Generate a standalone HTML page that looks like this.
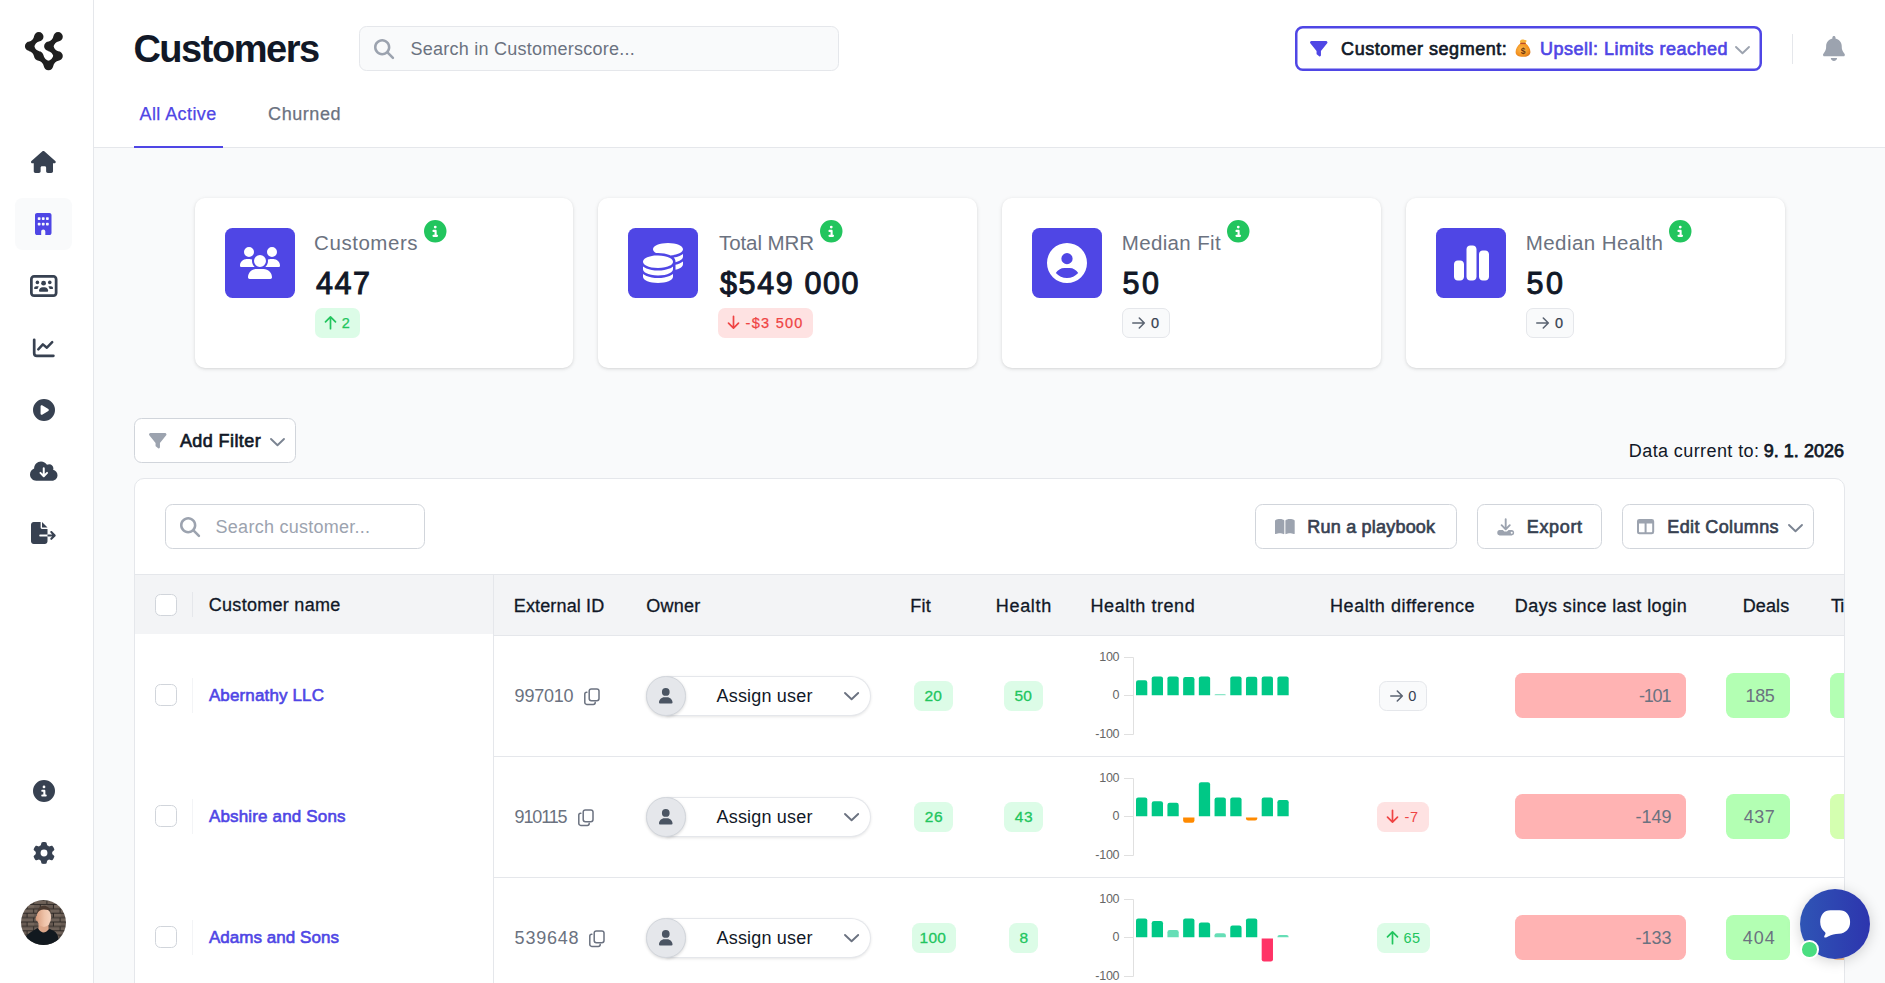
<!DOCTYPE html>
<html lang="en"><head><meta charset="utf-8"><title>Customers</title>
<style>
html,body{margin:0;padding:0}
body{width:1885px;height:983px;overflow:hidden;position:relative;background:#f9fafb;font-family:"Liberation Sans", sans-serif;-webkit-font-smoothing:antialiased}
svg{display:block;overflow:visible}
</style></head><body>
<aside>
<div style="position:absolute;box-sizing:border-box;left:0px;top:0px;width:94px;height:983px;background:#fff;border-right:1px solid #e5e7eb"></div>
<svg style="position:absolute;left:0px;top:0px;" width="93" height="93" viewBox="0 0 93 93"><path d="M34.10 36.70a4.7 4.7 0 1 0 9.4 0a4.7 4.7 0 1 0 -9.4 0zM24.90 46.30a4.7 4.7 0 1 0 9.4 0a4.7 4.7 0 1 0 -9.4 0zM34.10 56.00a4.7 4.7 0 1 0 9.4 0a4.7 4.7 0 1 0 -9.4 0zM43.80 65.60a4.7 4.7 0 1 0 9.4 0a4.7 4.7 0 1 0 -9.4 0zM53.40 56.00a4.7 4.7 0 1 0 9.4 0a4.7 4.7 0 1 0 -9.4 0zM44.10 46.30a4.7 4.7 0 1 0 9.4 0a4.7 4.7 0 1 0 -9.4 0zM53.40 36.70a4.7 4.7 0 1 0 9.4 0a4.7 4.7 0 1 0 -9.4 0zM34.16 35.92A7.11 7.11 0 0 1 28.63 41.70L34.24 47.08A7.11 7.11 0 0 1 39.77 41.30zM28.59 50.89A7.22 7.22 0 0 1 34.16 56.77L39.81 51.41A7.22 7.22 0 0 1 34.24 45.53zM37.88 60.61A7.68 7.68 0 0 1 43.90 66.57L49.42 60.99A7.68 7.68 0 0 1 43.40 55.03zM53.11 66.53A7.56 7.56 0 0 1 59.03 60.61L53.49 55.07A7.56 7.56 0 0 1 47.57 60.99zM59.10 51.41A7.34 7.34 0 0 1 53.43 45.50L47.80 50.89A7.34 7.34 0 0 1 53.47 56.80zM53.43 47.11A7.22 7.22 0 0 1 59.06 41.30L53.47 35.89A7.22 7.22 0 0 1 47.84 41.70z" fill="#1f1f1f"/></svg>
<svg style="position:absolute;left:31.1px;top:150.9px" width="24.75" height="22.00" viewBox="0 0 576 512"><path fill="#374151" d="M575.8 255.500c0 18-15 32.100-32 32.100h-32l.7 160.200c0 2.700-.2 5.400-.5 8.100V472c0 22.100-17.900 40-40 40H456c-1.100 0-2.200 0-3.300-.1c-1.400 .1-2.800 .1-4.200 .1H416 392c-22.100 0-40-17.900-40-40V448 384c0-17.700-14.300-32-32-32H256c-17.700 0-32 14.300-32 32v64 24c0 22.100-17.900 40-40 40H160 128.100c-1.500 0-3-.1-4.500-.2c-1.200 .1-2.400 .2-3.600 .2H104c-22.100 0-40-17.900-40-40V360c0-.9 0-1.900 .1-2.800V287.600H32c-18 0-32-14-32-32.100c0-9 3-17 10-24L266.400 8c7-7 15-8 22-8s15 2 21 7L564.800 231.500c8 7 12 15 11 24z"/></svg>
<div style="position:absolute;box-sizing:border-box;left:15px;top:198px;width:57px;height:52px;background:#f9fafb;border-radius:7.5px"></div>
<svg style="position:absolute;left:35.4px;top:213px;" width="16.5" height="22" viewBox="0 0 384 512"><path fill="#4f46e5" d="M48 0C21.500 0 0 21.500 0 48V464c0 26.500 21.500 48 48 48h96V432c0-26.500 21.500-48 48-48s48 21.500 48 48v80h96c26.500 0 48-21.500 48-48V48c0-26.500-21.500-48-48-48H48zM64 240c0-8.800 7.200-16 16-16h32c8.800 0 16 7.200 16 16v32c0 8.800-7.200 16-16 16H80c-8.800 0-16-7.200-16-16V240zm112-16h32c8.800 0 16 7.200 16 16v32c0 8.800-7.200 16-16 16H176c-8.800 0-16-7.200-16-16V240c0-8.800 7.200-16 16-16zm80 16c0-8.800 7.200-16 16-16h32c8.800 0 16 7.200 16 16v32c0 8.800-7.200 16-16 16H272c-8.800 0-16-7.200-16-16V240zM80 96h32c8.800 0 16 7.200 16 16v32c0 8.800-7.200 16-16 16H80c-8.800 0-16-7.200-16-16V112c0-8.800 7.200-16 16-16zm80 16c0-8.800 7.200-16 16-16h32c8.800 0 16 7.200 16 16v32c0 8.800-7.200 16-16 16H176c-8.800 0-16-7.200-16-16V112zM272 96h32c8.800 0 16 7.200 16 16v32c0 8.800-7.200 16-16 16H272c-8.800 0-16-7.200-16-16V112c0-8.800 7.200-16 16-16z"/></svg>
<svg style="position:absolute;left:30px;top:275px;" width="27.5" height="22" viewBox="0 0 640 512"><path fill="#374151" fill-rule="evenodd" d="M96 0C43 0 0 43 0 96V416c0 53 43 96 96 96H544c53 0 96-43 96-96V96c0-53-43-96-96-96H96zM64 96c0-17.700 14.300-32 32-32H544c17.700 0 32 14.300 32 32V416c0 17.700-14.300 32-32 32H96c-17.700 0-32-14.300-32-32V96z"/><g fill="#374151"><circle cx="316" cy="190" r="56"/><circle cx="172" cy="172" r="42"/><circle cx="460" cy="172" r="42"/><path d="M230 388c-12 0-21-9-21-21c0-46 38-84 84-84h46c46 0 84 38 84 84c0 12-9 21-21 21z"/><path d="M110 326c-8 0-15-7-15-15c0-27 21-48 48-48h30c12 0 23 4 32 11c-16 12-27 31-30 52z"/><path d="M522 326c8 0 15-7 15-15c0-27-21-48-48-48h-30c-12 0-23 4-32 11c16 12 27 31 30 52z"/></g></svg>
<svg style="position:absolute;left:30px;top:335px;" width="28" height="25" viewBox="30 335 28 25"><path d="M34.2 339.8V353.2a2.600 2.600 0 0 0 2.600 2.600H53.400" fill="none" stroke="#374151" stroke-width="2.700" stroke-linecap="round"/><polyline points="38.300,349.300 42.900,344.400 46.900,347.700 52.200,342.200" fill="none" stroke="#374151" stroke-width="2.500" stroke-linecap="round" stroke-linejoin="round"/></svg>
<svg style="position:absolute;left:32.5px;top:399px" width="22.00" height="22.00" viewBox="0 0 512 512"><path fill="#374151" d="M0 256a256 256 0 1 1 512 0A256 256 0 1 1 0 256zM188.300 147.100c-7.600 4.200-12.300 12.300-12.300 20.900V344c0 8.700 4.700 16.700 12.300 20.900s16.800 4.100 24.300-.5l144-88c7.100-4.400 11.500-12.100 11.500-20.500s-4.400-16.100-11.500-20.500l-144-88c-7.400-4.500-16.700-4.700-24.300-.5z"/></svg>
<svg style="position:absolute;left:29.9px;top:460px;" width="27.5" height="22" viewBox="0 0 640 512"><path fill="#374151" d="M144 480C64.500 480 0 415.500 0 336c0-62.800 40.200-116.200 96.200-135.900c-.1-2.700-.2-5.400-.2-8.100c0-88.400 71.600-160 160-160c59.300 0 111 32.200 138.700 80.200C409.900 102 428.300 96 448 96c53 0 96 43 96 96c0 12.200-2.300 23.800-6.400 34.600C596 238.400 640 290.100 640 352c0 70.700-57.300 128-128 128H144z"/><path d="M320 190V372M243 300l77 77 77-77" fill="none" stroke="#fff" stroke-width="46" stroke-linecap="round" stroke-linejoin="round"/></svg>
<svg style="position:absolute;left:31px;top:522px;" width="24.75" height="22" viewBox="0 0 576 512"><path fill="#374151" d="M0 64C0 28.700 28.700 0 64 0H224V128c0 17.700 14.300 32 32 32H384V288H216c-13.300 0-24 10.700-24 24s10.700 24 24 24H384V448c0 35.300-28.700 64-64 64H64c-35.300 0-64-28.700-64-64V64z"/><path fill="#374151" d="M384 128H256V0L384 128z" transform="translate(0,0)"/><path fill="#374151" d="M384 336V288H494.100l-39-39c-9.400-9.400-9.400-24.600 0-33.900s24.600-9.400 33.900 0l80 80c9.400 9.400 9.400 24.600 0 33.900l-80 80c-9.400 9.400-24.600 9.400-33.900 0s-9.400-24.600 0-33.900l39-39H384z"/></svg>
<svg style="position:absolute;left:32.5px;top:780px" width="22.00" height="22.00" viewBox="0 0 512 512"><path fill="#374151" d="M256 512A256 256 0 1 0 256 0a256 256 0 1 0 0 512zM216 336h24V272H216c-13.300 0-24-10.700-24-24s10.700-24 24-24h48c13.300 0 24 10.700 24 24v88h8c13.300 0 24 10.700 24 24s-10.700 24-24 24H216c-13.300 0-24-10.700-24-24s10.700-24 24-24zm40-208a32 32 0 1 1 0 64 32 32 0 1 1 0-64z"/></svg>
<svg style="position:absolute;left:32.5px;top:842px" width="22.00" height="22.00" viewBox="0 0 512 512"><path fill="#374151" d="M495.900 166.600c3.200 8.700 .5 18.400-6.400 24.600l-43.300 39.400c1.100 8.300 1.700 16.800 1.700 25.400s-.6 17.100-1.700 25.400l43.300 39.400c6.900 6.200 9.600 15.900 6.400 24.600c-4.400 11.900-9.700 23.300-15.800 34.300l-4.700 8.100c-6.600 11-14 21.400-22.100 31.200c-5.900 7.200-15.700 9.600-24.500 6.800l-55.700-17.700c-13.400 10.300-28.200 18.900-44 25.400l-12.500 57.100c-2 9.100-9 16.300-18.200 17.800c-13.800 2.300-28 3.500-42.500 3.500s-28.700-1.200-42.500-3.500c-9.200-1.500-16.200-8.700-18.200-17.800l-12.500-57.100c-15.800-6.500-30.600-15.100-44-25.400L83.100 425.900c-8.800 2.800-18.600 .3-24.500-6.800c-8.100-9.800-15.500-20.200-22.100-31.200l-4.700-8.100c-6.100-11-11.400-22.400-15.800-34.300c-3.200-8.700-.5-18.400 6.400-24.600l43.300-39.400C64.600 273.100 64 264.600 64 256s.6-17.100 1.700-25.400L22.400 191.200c-6.900-6.200-9.600-15.900-6.400-24.600c4.400-11.900 9.700-23.300 15.800-34.300l4.700-8.100c6.600-11 14-21.400 22.100-31.200c5.900-7.200 15.700-9.600 24.500-6.800l55.700 17.700c13.400-10.300 28.200-18.900 44-25.400l12.500-57.100c2-9.100 9-16.300 18.200-17.800C227.300 1.200 241.500 0 256 0s28.700 1.200 42.500 3.500c9.200 1.500 16.200 8.700 18.200 17.800l12.500 57.100c15.800 6.500 30.600 15.100 44 25.400l55.700-17.700c8.800-2.800 18.600-.3 24.500 6.800c8.100 9.800 15.500 20.200 22.100 31.200l4.700 8.100c6.100 11 11.400 22.400 15.800 34.300zM256 336a80 80 0 1 0 0-160 80 80 0 1 0 0 160z"/></svg>
<svg style="position:absolute;left:21px;top:899.8px;" width="45" height="45" viewBox="0 0 45 45"><defs><clipPath id="avc"><circle cx="22.500" cy="22.500" r="22.500"/></clipPath><pattern id="brick" width="13.200" height="8.800" patternUnits="userSpaceOnUse"><rect width="13.200" height="8.800" fill="#2f2a27"/><rect x="0" y=".5" width="12.200" height="3.400" fill="#6f6259"/><rect x="-6.600" y="4.900" width="12.200" height="3.400" fill="#675a52"/><rect x="6.600" y="4.900" width="12.200" height="3.400" fill="#74665c"/></pattern><linearGradient id="skin" x1="0" x2="1"><stop offset="0" stop-color="#d99f80"/><stop offset=".55" stop-color="#efc4aa"/><stop offset="1" stop-color="#f4d3bf"/></linearGradient></defs><g clip-path="url(#avc)"><rect width="45" height="45" fill="url(#brick)"/><path d="M3.500 45c0-5 .8-8.500 3.300-10.800 2.500-2.400 6-3.800 9.600-6.300l6.100 4 6.100-3.100c3 1.600 6.300 2.800 7.600 5.600 1.300 2.800 1.700 6.300 1.700 10.600z" fill="#12191f"/><path d="M17.500 24h10v5.500c-1.500 2-3.200 2.900-5 2.900s-3.500-1.200-5-3.400z" fill="#dba689"/><ellipse cx="15.900" cy="18.500" rx="1.300" ry="2.400" fill="#d39a7c"/><ellipse cx="22.900" cy="17.300" rx="7.200" ry="9.700" fill="url(#skin)"/><path d="M16 13.500c.3-5 3-7.800 6.900-7.800 3.600 0 6.300 2.300 6.900 6.500-1.600-2-3.800-2.700-6.900-2.700-3 0-5.300 1.300-6.900 4z" fill="#4b3a30"/></g></svg>
</aside>
<header>
<div style="position:absolute;box-sizing:border-box;left:94px;top:0px;width:1791px;height:148px;background:#fff;border-bottom:1px solid #e5e7eb"></div>
<span style="position:absolute;left:133.40px;top:30px;font-size:38px;line-height:38px;font-weight:700;color:#111827;letter-spacing:-1.471px;white-space:pre">Customers</span>
<div style="position:absolute;box-sizing:border-box;left:359px;top:26px;width:480px;height:45px;background:#f9fafb;border:1px solid #e5e7eb;border-radius:7.5px"></div>
<svg style="position:absolute;left:374px;top:39px" width="20.20" height="20.20" viewBox="0 0 512 512"><path fill="#9ca3af" d="M416 208c0 45.900-14.900 88.300-40 122.700L502.600 457.400c12.500 12.500 12.500 32.800 0 45.300s-32.800 12.500-45.300 0L330.700 376c-34.400 25.200-76.800 40-122.700 40C93.100 416 0 322.900 0 208S93.100 0 208 0S416 93.100 416 208zM208 352a144 144 0 1 0 0-288 144 144 0 1 0 0 288z"/></svg>
<span style="position:absolute;left:410.50px;top:40px;font-size:18px;line-height:18px;font-weight:400;color:#6b7280;letter-spacing:0.249px;white-space:pre">Search in Customerscore...</span>
<svg style="position:absolute;left:1295px;top:26px;" width="467" height="45" viewBox="0 0 467 45"><rect x="1.250" y="1.250" width="464.500" height="42.500" rx="6.500" fill="#fff" stroke="#4f46e5" stroke-width="2.500"/></svg>
<svg style="position:absolute;left:1310px;top:39.75px" width="17.50" height="17.50" viewBox="0 0 512 512"><path fill="#4f46e5" d="M3.900 54.900C10.500 40.900 24.500 32 40 32H472c15.500 0 29.500 8.900 36.100 22.900s4.600 30.500-5.200 42.500L320 320.900V448c0 12.100-6.800 23.200-17.700 28.600s-23.800 4.300-33.500-3l-64-48c-8.100-6-12.800-15.500-12.800-25.600V320.900L9 97.300C-.7 85.400-2.800 68.800 3.900 54.900z"/></svg>
<span style="position:absolute;left:1341.12px;top:40px;font-size:18px;line-height:18px;font-weight:400;color:#111827;letter-spacing:0.543px;white-space:pre;-webkit-text-stroke:0.65px #111827">Customer segment:</span>
<svg style="position:absolute;left:1515.3px;top:39.2px;" width="16" height="18.3" viewBox="0 0 16 18.300"><defs><radialGradient id="mbg" cx=".42" cy=".45" r=".72"><stop offset="0" stop-color="#fdbb4e"/><stop offset=".65" stop-color="#f2901f"/><stop offset="1" stop-color="#c8661b"/></radialGradient></defs><path d="M5 3.300C4.600 1.900 5.600 .7 7.300 .5 8.700 .3 9.700 1.300 10.700 1.100c.8-.1 1.100.9.500 1.700L10.200 4.400H5.800z" fill="#f7b43e"/><path d="M5.600 4.300h4.800c3 2.300 5 5.400 5 8.600 0 3.300-3.100 4.900-7.400 4.900S.6 16.200.6 12.900c0-3.200 2-6.300 5-8.600z" fill="url(#mbg)"/><rect x="5.200" y="3.800" width="5.600" height="1.300" rx=".65" fill="#b94a2a"/><text x="8" y="15" font-size="8.500" font-weight="700" text-anchor="middle" fill="#6b3410" font-family="Liberation Sans, sans-serif">$</text></svg>
<span style="position:absolute;left:1540.12px;top:40px;font-size:18px;line-height:18px;font-weight:400;color:#4f46e5;letter-spacing:0.490px;white-space:pre;-webkit-text-stroke:0.65px #4f46e5">Upsell: Limits reached</span>
<svg style="position:absolute;left:1735.3px;top:45.5px;" width="15" height="8.2" viewBox="0 0 15 8.2"><polyline points="1,1 7.5,7.199999999999999 14,1" fill="none" stroke="#9ca3af" stroke-width="1.9" stroke-linecap="round" stroke-linejoin="round"/></svg>
<div style="position:absolute;box-sizing:border-box;left:1792px;top:34px;width:1px;height:30px;background:#e5e7eb"></div>
<svg style="position:absolute;left:1822.9px;top:35.9px" width="21.88" height="25.00" viewBox="0 0 448 512"><path fill="#9ca3af" d="M224 0c-17.700 0-32 14.300-32 32V51.200C119 66 64 130.600 64 208v18.800c0 47-17.300 92.400-48.500 127.600l-7.400 8.300c-8.400 9.400-10.400 22.900-5.300 34.400S19.400 416 32 416H416c12.600 0 24-7.400 29.200-18.900s3.100-25-5.300-34.400l-7.400-8.300C401.300 319.200 384 273.900 384 226.800V208c0-77.400-55-142-128-156.800V32c0-17.700-14.300-32-32-32zm45.300 493.300c12-12 18.700-28.300 18.700-45.300H224 160c0 17 6.700 33.300 18.700 45.300s28.300 18.700 45.300 18.700s33.300-6.700 45.300-18.700z"/></svg>
<span style="position:absolute;left:139.53px;top:105px;font-size:18px;line-height:18px;font-weight:400;color:#4f46e5;letter-spacing:0.415px;white-space:pre;-webkit-text-stroke:0.25px #4f46e5">All Active</span>
<span style="position:absolute;left:268.12px;top:105px;font-size:18px;line-height:18px;font-weight:400;color:#6b7280;letter-spacing:0.552px;white-space:pre;-webkit-text-stroke:0.25px #6b7280">Churned</span>
<div style="position:absolute;box-sizing:border-box;left:134px;top:145.5px;width:89px;height:2.5px;background:#4f46e5"></div>
</header>
<main><section>
<div style="position:absolute;box-sizing:border-box;left:195px;top:198px;width:378px;height:170px;background:#fff;border-radius:10px;box-shadow:0 1px 4px rgba(0,0,0,.10),0 1px 2.500px rgba(0,0,0,.06)"></div>
<div style="position:absolute;box-sizing:border-box;left:225px;top:228px;width:70px;height:70px;background:#4f46e5;border-radius:7.5px"></div>
<svg style="position:absolute;left:240.0px;top:247.0px" width="40.00" height="32.00" viewBox="0 0 640 512"><path fill="#fff" d="M144 0a80 80 0 1 1 0 160A80 80 0 1 1 144 0zM512 0a80 80 0 1 1 0 160A80 80 0 1 1 512 0zM0 298.700C0 239.800 47.800 192 106.700 192h42.700c15.900 0 31 3.500 44.600 9.700c-1.300 7.200-1.900 14.700-1.900 22.300c0 38.200 16.800 72.500 43.300 96c-.2 0-.4 0-.7 0H21.300C9.600 320 0 310.400 0 298.700zM405.300 320c-.2 0-.4 0-.7 0c26.600-23.500 43.300-57.800 43.300-96c0-7.600-.7-15-1.900-22.300c13.600-6.300 28.700-9.700 44.600-9.700h42.700C592.200 192 640 239.800 640 298.700c0 11.800-9.600 21.300-21.300 21.300H405.300zM224 224a96 96 0 1 1 192 0 96 96 0 1 1 -192 0zM128 485.300C128 411.700 187.700 352 261.300 352H378.700C452.300 352 512 411.700 512 485.300c0 14.700-11.900 26.700-26.700 26.700H154.700c-14.700 0-26.700-11.900-26.700-26.700z"/></svg>
<span style="position:absolute;left:314.10px;top:233px;font-size:20.5px;line-height:20.5px;font-weight:400;color:#6b7280;letter-spacing:0.543px;white-space:pre">Customers</span>
<svg style="position:absolute;left:424.15px;top:220.05px" width="22.50" height="22.50" viewBox="0 0 512 512"><path fill="#22c55e" d="M256 512A256 256 0 1 0 256 0a256 256 0 1 0 0 512zM216 336h24V272H216c-13.300 0-24-10.700-24-24s10.700-24 24-24h48c13.300 0 24 10.700 24 24v88h8c13.300 0 24 10.700 24 24s-10.700 24-24 24H216c-13.300 0-24-10.700-24-24s10.700-24 24-24zm40-208a32 32 0 1 1 0 64 32 32 0 1 1 0-64z"/></svg>
<span style="position:absolute;left:316.00px;top:268px;font-size:30.5px;line-height:30.5px;font-weight:400;color:#111827;letter-spacing:1.537px;white-space:pre;-webkit-text-stroke:1.0px #111827">447</span>
<div style="position:absolute;box-sizing:border-box;left:315px;top:308px;width:45px;height:30px;background:#dcfce7;border-radius:7px"></div>
<svg style="position:absolute;left:324px;top:315px;" width="14" height="15" viewBox="0 0 14 15"><path d="M6.500 13.700V2M1.500 6.800l5-5 5 5" fill="none" stroke="#22c55e" stroke-width="1.700" stroke-linecap="round" stroke-linejoin="round"/></svg>
<span style="position:absolute;left:341.85px;top:316px;font-size:14.5px;line-height:14.5px;font-weight:400;color:#22c55e;letter-spacing:0.000px;white-space:pre;-webkit-text-stroke:0.25px #22c55e">2</span>
<div style="position:absolute;box-sizing:border-box;left:598px;top:198px;width:379px;height:170px;background:#fff;border-radius:10px;box-shadow:0 1px 4px rgba(0,0,0,.10),0 1px 2.500px rgba(0,0,0,.06)"></div>
<div style="position:absolute;box-sizing:border-box;left:628px;top:228px;width:70px;height:70px;background:#4f46e5;border-radius:7.5px"></div>
<svg style="position:absolute;left:643.0px;top:243.0px" width="40.00" height="40.00" viewBox="0 0 512 512"><path fill="#fff" d="M512 80c0 18-14.300 34.600-38.400 48c-29.100 16.100-72.500 27.500-122.300 30.900c-3.700-1.800-7.400-3.500-11.300-5C300.600 137.400 248.200 128 192 128c-8.300 0-16.400 .2-24.500 .6l-1.100-.6C142.300 114.600 128 98 128 80c0-44.200 86-80 192-80S512 35.800 512 80zM160.700 161.100c10.200-.7 20.700-1.100 31.300-1.100c62.200 0 117.400 12.300 152.500 31.400C369.300 204.900 384 221.700 384 240c0 4-.7 7.900-2.100 11.700c-4.600 13.200-17 25.300-35 35.500c0 0 0 0 0 0c-.1 .1-.3 .1-.4 .2l0 0 0 0c-.3 .2-.6 .3-.9 .5c-35 19.400-90.800 32-153.600 32c-59.600 0-112.900-11.300-148.200-29.100c-1.900-.9-3.700-1.900-5.500-2.900C14.300 274.600 0 258 0 240c0-34.800 53.400-64.500 128-75.400c10.500-1.500 21.400-2.700 32.700-3.500zM416 240c0-21.900-10.600-39.900-24.100-53.400c28.300-4.400 54.200-11.400 76.200-20.500c16.300-6.800 31.500-15.200 43.900-25.500V176c0 19.300-16.500 37.100-43.800 50.900c-14.600 7.400-32.400 13.700-52.400 18.500c.1-1.800 .2-3.500 .2-5.300zm-32 96c0 18-14.300 34.600-38.400 48c-1.800 1-3.600 1.900-5.500 2.900C304.900 404.700 251.600 416 192 416c-62.800 0-118.600-12.600-153.600-32C14.300 370.600 0 354 0 336V300.600c12.500 10.300 27.600 18.700 43.900 25.500C83.400 342.600 135.800 352 192 352s108.600-9.400 148.100-25.900c7.800-3.200 15.300-6.900 22.400-10.900c6.100-3.400 11.800-7.200 17.200-11.200c1.500-1.100 2.900-2.300 4.300-3.400V304v5.700V336zm32 0V304 278.100c19-4.200 36.500-9.500 52.100-16c16.300-6.800 31.500-15.200 43.900-25.500V272c0 10.500-5 21-14.900 30.900c-16.300 16.300-45 29.700-81.300 38.400c.1-1.700 .2-3.500 .2-5.300zM192 448c56.200 0 108.600-9.400 148.100-25.900c16.300-6.800 31.500-15.200 43.900-25.500V432c0 44.200-86 80-192 80S0 476.200 0 432V396.600c12.500 10.300 27.600 18.700 43.900 25.500C83.400 438.600 135.800 448 192 448z"/></svg>
<span style="position:absolute;left:719.00px;top:233px;font-size:20.5px;line-height:20.5px;font-weight:400;color:#6b7280;letter-spacing:-0.085px;white-space:pre">Total MRR</span>
<svg style="position:absolute;left:820.25px;top:220.05px" width="22.50" height="22.50" viewBox="0 0 512 512"><path fill="#22c55e" d="M256 512A256 256 0 1 0 256 0a256 256 0 1 0 0 512zM216 336h24V272H216c-13.300 0-24-10.700-24-24s10.700-24 24-24h48c13.300 0 24 10.700 24 24v88h8c13.300 0 24 10.700 24 24s-10.700 24-24 24H216c-13.300 0-24-10.700-24-24s10.700-24 24-24zm40-208a32 32 0 1 1 0 64 32 32 0 1 1 0-64z"/></svg>
<span style="position:absolute;left:720.00px;top:268px;font-size:30.5px;line-height:30.5px;font-weight:400;color:#111827;letter-spacing:1.621px;white-space:pre;-webkit-text-stroke:1.0px #111827">$549 000</span>
<div style="position:absolute;box-sizing:border-box;left:718px;top:308px;width:95px;height:30px;background:#fee2e2;border-radius:7px"></div>
<svg style="position:absolute;left:727px;top:315px;" width="14" height="15" viewBox="0 0 14 15"><path d="M6.500 1.300V13M1.500 8.200l5 5 5-5" fill="none" stroke="#ef4444" stroke-width="1.700" stroke-linecap="round" stroke-linejoin="round"/></svg>
<span style="position:absolute;left:745.62px;top:316px;font-size:14.5px;line-height:14.5px;font-weight:400;color:#ef4444;letter-spacing:1.273px;white-space:pre;-webkit-text-stroke:0.25px #ef4444">-$3 500</span>
<div style="position:absolute;box-sizing:border-box;left:1002px;top:198px;width:379px;height:170px;background:#fff;border-radius:10px;box-shadow:0 1px 4px rgba(0,0,0,.10),0 1px 2.500px rgba(0,0,0,.06)"></div>
<div style="position:absolute;box-sizing:border-box;left:1032px;top:228px;width:70px;height:70px;background:#4f46e5;border-radius:7.5px"></div>
<svg style="position:absolute;left:1047.0px;top:243.0px" width="40.00" height="40.00" viewBox="0 0 512 512"><path fill="#fff" d="M399 384.200C376.900 345.800 335.400 320 288 320H224c-47.400 0-88.900 25.800-111 64.200c35.200 39.200 86.200 63.800 143 63.800s107.800-24.700 143-63.800zM0 256a256 256 0 1 1 512 0A256 256 0 1 1 0 256zm256 16a72 72 0 1 0 0-144 72 72 0 1 0 0 144z"/></svg>
<span style="position:absolute;left:1121.80px;top:233px;font-size:20.5px;line-height:20.5px;font-weight:400;color:#6b7280;letter-spacing:0.344px;white-space:pre">Median Fit</span>
<svg style="position:absolute;left:1227.15px;top:220.05px" width="22.50" height="22.50" viewBox="0 0 512 512"><path fill="#22c55e" d="M256 512A256 256 0 1 0 256 0a256 256 0 1 0 0 512zM216 336h24V272H216c-13.300 0-24-10.700-24-24s10.700-24 24-24h48c13.300 0 24 10.700 24 24v88h8c13.300 0 24 10.700 24 24s-10.700 24-24 24H216c-13.300 0-24-10.700-24-24s10.700-24 24-24zm40-208a32 32 0 1 1 0 64 32 32 0 1 1 0-64z"/></svg>
<span style="position:absolute;left:1122.50px;top:268px;font-size:30.5px;line-height:30.5px;font-weight:400;color:#111827;letter-spacing:2.637px;white-space:pre;-webkit-text-stroke:1.0px #111827">50</span>
<div style="position:absolute;box-sizing:border-box;left:1122px;top:308px;width:47.5px;height:30px;background:#f9fafb;border:1px solid #e5e7eb;border-radius:7px"></div>
<svg style="position:absolute;left:1131.3px;top:315.8px;" width="15" height="14" viewBox="0 0 15 14"><path d="M1.800 7H13.300M8.300 2l5 5-5 5" fill="none" stroke="#5b6472" stroke-width="1.600" stroke-linecap="round" stroke-linejoin="round"/></svg>
<span style="position:absolute;left:1150.90px;top:316px;font-size:14.5px;line-height:14.5px;font-weight:400;color:#374151;letter-spacing:0.000px;white-space:pre;-webkit-text-stroke:0.25px #374151">0</span>
<div style="position:absolute;box-sizing:border-box;left:1406px;top:198px;width:379px;height:170px;background:#fff;border-radius:10px;box-shadow:0 1px 4px rgba(0,0,0,.10),0 1px 2.500px rgba(0,0,0,.06)"></div>
<div style="position:absolute;box-sizing:border-box;left:1436px;top:228px;width:70px;height:70px;background:#4f46e5;border-radius:7.5px"></div>
<svg style="position:absolute;left:1453.5px;top:243.0px" width="35.00" height="40.00" viewBox="0 0 448 512"><path fill="#fff" d="M160 80c0-26.500 21.500-48 48-48h32c26.500 0 48 21.500 48 48V432c0 26.500-21.500 48-48 48H208c-26.500 0-48-21.500-48-48V80zM0 272c0-26.500 21.500-48 48-48H80c26.500 0 48 21.500 48 48V432c0 26.500-21.500 48-48 48H48c-26.500 0-48-21.500-48-48V272zM368 96h32c26.500 0 48 21.500 48 48V432c0 26.500-21.500 48-48 48H368c-26.500 0-48-21.500-48-48V144c0-26.500 21.500-48 48-48z"/></svg>
<span style="position:absolute;left:1525.80px;top:233px;font-size:20.5px;line-height:20.5px;font-weight:400;color:#6b7280;letter-spacing:0.418px;white-space:pre">Median Health</span>
<svg style="position:absolute;left:1669.05px;top:220.05px" width="22.50" height="22.50" viewBox="0 0 512 512"><path fill="#22c55e" d="M256 512A256 256 0 1 0 256 0a256 256 0 1 0 0 512zM216 336h24V272H216c-13.300 0-24-10.700-24-24s10.700-24 24-24h48c13.300 0 24 10.700 24 24v88h8c13.300 0 24 10.700 24 24s-10.700 24-24 24H216c-13.300 0-24-10.700-24-24s10.700-24 24-24zm40-208a32 32 0 1 1 0 64 32 32 0 1 1 0-64z"/></svg>
<span style="position:absolute;left:1526.50px;top:268px;font-size:30.5px;line-height:30.5px;font-weight:400;color:#111827;letter-spacing:2.637px;white-space:pre;-webkit-text-stroke:1.0px #111827">50</span>
<div style="position:absolute;box-sizing:border-box;left:1526px;top:308px;width:47.5px;height:30px;background:#f9fafb;border:1px solid #e5e7eb;border-radius:7px"></div>
<svg style="position:absolute;left:1535.3px;top:315.8px;" width="15" height="14" viewBox="0 0 15 14"><path d="M1.800 7H13.300M8.300 2l5 5-5 5" fill="none" stroke="#5b6472" stroke-width="1.600" stroke-linecap="round" stroke-linejoin="round"/></svg>
<span style="position:absolute;left:1554.90px;top:316px;font-size:14.5px;line-height:14.5px;font-weight:400;color:#374151;letter-spacing:0.000px;white-space:pre;-webkit-text-stroke:0.25px #374151">0</span>
</section>
<section>
<div style="position:absolute;box-sizing:border-box;left:134px;top:418px;width:162px;height:45px;background:#fff;border:1px solid #d1d5db;border-radius:7.5px"></div>
<svg style="position:absolute;left:149px;top:431.75px" width="17.50" height="17.50" viewBox="0 0 512 512"><path fill="#9ca3af" d="M3.900 54.900C10.500 40.900 24.500 32 40 32H472c15.500 0 29.500 8.900 36.100 22.900s4.600 30.500-5.200 42.500L320 320.900V448c0 12.100-6.800 23.200-17.700 28.600s-23.800 4.300-33.500-3l-64-48c-8.100-6-12.800-15.500-12.800-25.600V320.900L9 97.300C-.7 85.400-2.800 68.800 3.900 54.900z"/></svg>
<span style="position:absolute;left:179.92px;top:432px;font-size:18px;line-height:18px;font-weight:400;color:#111827;letter-spacing:0.413px;white-space:pre;-webkit-text-stroke:0.65px #111827">Add Filter</span>
<svg style="position:absolute;left:269.6px;top:438px;" width="15" height="8.2" viewBox="0 0 15 8.2"><polyline points="1,1 7.5,7.199999999999999 14,1" fill="none" stroke="#7b8492" stroke-width="1.9" stroke-linecap="round" stroke-linejoin="round"/></svg>
<span style="position:absolute;left:1628.80px;top:442px;font-size:18px;line-height:18px;font-weight:400;color:#111827;letter-spacing:0.410px;white-space:pre">Data current to:</span>
<span style="position:absolute;left:1763.67px;top:442px;font-size:18px;line-height:18px;font-weight:400;color:#111827;letter-spacing:0.044px;white-space:pre;-webkit-text-stroke:0.75px #111827">9. 1. 2026</span>
<div style="position:absolute;box-sizing:border-box;left:134px;top:478px;width:1711px;height:520px;background:#fff;border:1px solid #e5e7eb;border-radius:10px"></div>
<div style="position:absolute;box-sizing:border-box;left:165px;top:504px;width:260px;height:45px;background:#fff;border:1px solid #d1d5db;border-radius:7.5px"></div>
<svg style="position:absolute;left:180px;top:517px" width="20.20" height="20.20" viewBox="0 0 512 512"><path fill="#9ca3af" d="M416 208c0 45.900-14.900 88.300-40 122.700L502.600 457.400c12.500 12.500 12.500 32.800 0 45.300s-32.800 12.500-45.300 0L330.700 376c-34.400 25.200-76.800 40-122.700 40C93.100 416 0 322.900 0 208S93.100 0 208 0S416 93.100 416 208zM208 352a144 144 0 1 0 0-288 144 144 0 1 0 0 288z"/></svg>
<span style="position:absolute;left:215.60px;top:518px;font-size:18px;line-height:18px;font-weight:400;color:#9ca3af;letter-spacing:0.255px;white-space:pre">Search customer...</span>
<div style="position:absolute;box-sizing:border-box;left:1255px;top:504px;width:202px;height:45px;background:#fff;border:1px solid #d1d5db;border-radius:7.5px"></div>
<svg style="position:absolute;left:1275.2px;top:518px" width="19.69" height="17.50" viewBox="0 0 576 512"><path fill="#9ca3af" d="M249.600 471.500c10.800 3.800 22.400-4.100 22.400-15.500V78.600c0-4.200-1.600-8.400-5-11C247.400 52 202.400 32 144 32C93.500 32 46.300 45.300 18.100 56.100C6.800 60.500 0 71.700 0 83.800V454.100c0 11.900 12.800 20.200 24.100 16.500C55.600 460.100 105.500 448 144 448c33.900 0 79 14 105.600 23.500zm76.800 0C353 462 398.100 448 432 448c38.500 0 88.400 12.100 119.900 22.600c11.300 3.800 24.100-4.600 24.100-16.500V83.800c0-12.100-6.800-23.300-18.100-27.600C529.700 45.300 482.500 32 432 32c-58.400 0-103.400 20-123 35.600c-3.300 2.600-5 6.800-5 11V456c0 11.400 11.700 19.300 22.400 15.500z"/></svg>
<span style="position:absolute;left:1307.33px;top:518px;font-size:18px;line-height:18px;font-weight:400;color:#374151;letter-spacing:0.205px;white-space:pre;-webkit-text-stroke:0.65px #374151">Run a playbook</span>
<div style="position:absolute;box-sizing:border-box;left:1477px;top:504px;width:125px;height:45px;background:#fff;border:1px solid #d1d5db;border-radius:7.5px"></div>
<svg style="position:absolute;left:1496.8px;top:517.8px;" width="17.5" height="17.5" viewBox="0 0 17.500 17.500"><path d="M8.700 1.200V10.800M4.600 7.200l4.100 4.100 4.100-4.100" fill="none" stroke="#9ca3af" stroke-width="1.900" stroke-linecap="round" stroke-linejoin="round"/><path d="M2.600 11.900h3.200l1.600 1.600h2.600l1.600-1.600h3.200c1.300 0 2.300 1 2.300 2.300v.9c0 1.300-1 2.300-2.300 2.300H2.600c-1.300 0-2.300-1-2.300-2.300v-.9c0-1.300 1-2.300 2.300-2.300z" fill="#9ca3af"/><circle cx="14.700" cy="14.700" r="1" fill="#fff"/></svg>
<span style="position:absolute;left:1526.73px;top:518px;font-size:18px;line-height:18px;font-weight:400;color:#374151;letter-spacing:0.666px;white-space:pre;-webkit-text-stroke:0.65px #374151">Export</span>
<div style="position:absolute;box-sizing:border-box;left:1622px;top:504px;width:192px;height:45px;background:#fff;border:1px solid #d1d5db;border-radius:7.5px"></div>
<svg style="position:absolute;left:1637px;top:519.2px;" width="17.2" height="15.2" viewBox="0 0 17.200 15.200"><path fill-rule="evenodd" fill="#9ca3af" d="M2.500 0h12.200a2.500 2.500 0 0 1 2.500 2.500v10.200a2.500 2.500 0 0 1-2.500 2.500H2.500A2.500 2.500 0 0 1 0 12.700V2.500A2.500 2.500 0 0 1 2.500 0zM2 4.400v8.100c0 .4.300.7.700.7h4.900V4.400zM9.600 4.400v8.800h4.900c.4 0 .7-.3.700-.7V4.400z"/></svg>
<span style="position:absolute;left:1667.33px;top:518px;font-size:18px;line-height:18px;font-weight:400;color:#374151;letter-spacing:0.383px;white-space:pre;-webkit-text-stroke:0.65px #374151">Edit Columns</span>
<svg style="position:absolute;left:1788.2px;top:523.9px;" width="15" height="8.2" viewBox="0 0 15 8.2"><polyline points="1,1 7.5,7.199999999999999 14,1" fill="none" stroke="#7b8492" stroke-width="1.9" stroke-linecap="round" stroke-linejoin="round"/></svg>
<div style="position:absolute;box-sizing:border-box;left:135px;top:574px;width:1709px;height:1px;background:#e5e7eb"></div>
<div style="position:absolute;box-sizing:border-box;left:135px;top:575px;width:1709px;height:60px;background:#f3f4f6"></div>
<div style="position:absolute;box-sizing:border-box;left:494px;top:635px;width:1350px;height:1px;background:#e5e7eb"></div>
<div style="position:absolute;box-sizing:border-box;left:135px;top:634px;width:358.5px;height:2px;background:#fff"></div>
<span style="position:absolute;left:208.75px;top:596px;font-size:18px;line-height:18px;font-weight:400;color:#111827;letter-spacing:0.289px;white-space:pre;-webkit-text-stroke:0.3px #111827">Customer name</span>
<span style="position:absolute;left:513.75px;top:597px;font-size:18px;line-height:18px;font-weight:400;color:#111827;letter-spacing:0.147px;white-space:pre;-webkit-text-stroke:0.3px #111827">External ID</span>
<span style="position:absolute;left:646.15px;top:597px;font-size:18px;line-height:18px;font-weight:400;color:#111827;letter-spacing:0.270px;white-space:pre;-webkit-text-stroke:0.3px #111827">Owner</span>
<span style="position:absolute;left:910.15px;top:597px;font-size:18px;line-height:18px;font-weight:400;color:#111827;letter-spacing:0.303px;white-space:pre;-webkit-text-stroke:0.3px #111827">Fit</span>
<span style="position:absolute;left:995.85px;top:597px;font-size:18px;line-height:18px;font-weight:400;color:#111827;letter-spacing:0.656px;white-space:pre;-webkit-text-stroke:0.3px #111827">Health</span>
<span style="position:absolute;left:1090.55px;top:597px;font-size:18px;line-height:18px;font-weight:400;color:#111827;letter-spacing:0.550px;white-space:pre;-webkit-text-stroke:0.3px #111827">Health trend</span>
<span style="position:absolute;left:1330.05px;top:597px;font-size:18px;line-height:18px;font-weight:400;color:#111827;letter-spacing:0.547px;white-space:pre;-webkit-text-stroke:0.3px #111827">Health difference</span>
<span style="position:absolute;left:1514.85px;top:597px;font-size:18px;line-height:18px;font-weight:400;color:#111827;letter-spacing:0.392px;white-space:pre;-webkit-text-stroke:0.3px #111827">Days since last login</span>
<span style="position:absolute;left:1742.65px;top:597px;font-size:18px;line-height:18px;font-weight:400;color:#111827;letter-spacing:0.120px;white-space:pre;-webkit-text-stroke:0.3px #111827">Deals</span>
<span style="position:absolute;left:1831.05px;top:597px;font-size:18px;line-height:18px;font-weight:400;color:#111827;letter-spacing:-1.127px;white-space:pre;-webkit-text-stroke:0.3px #111827">Ti</span>
<div style="position:absolute;box-sizing:border-box;left:155px;top:594px;width:22px;height:22px;background:#fff;border:1px solid #d1d5db;border-radius:5.5px"></div>
<div style="position:absolute;box-sizing:border-box;left:192px;top:592px;width:1px;height:25px;background:#e5e7eb"></div>
<div style="position:absolute;box-sizing:border-box;left:493px;top:575px;width:1px;height:420px;background:#e5e7eb"></div>
<div style="position:absolute;box-sizing:border-box;left:155px;top:684px;width:22px;height:22px;background:#fff;border:1px solid #d1d5db;border-radius:5.5px"></div>
<div style="position:absolute;box-sizing:border-box;left:192px;top:678px;width:1px;height:34.5px;background:#f3f4f6"></div>
<span style="position:absolute;left:208.90px;top:687px;font-size:17px;line-height:17px;font-weight:400;color:#4f46e5;letter-spacing:0.139px;white-space:pre;-webkit-text-stroke:0.6px #4f46e5">Abernathy LLC</span>
<span style="position:absolute;left:514.60px;top:687px;font-size:18px;line-height:18px;font-weight:400;color:#6b7280;letter-spacing:-0.211px;white-space:pre">997010</span>
<svg style="position:absolute;left:584.1px;top:687.5px;" width="16" height="17.5" viewBox="0 0 16 17.500"><rect x="5.200" y="0.900" width="9.800" height="11.800" rx="2.200" fill="none" stroke="#6b7280" stroke-width="1.500"/><path d="M2.900 4.200H2.700A1.900 1.900 0 0 0 .8 6.100V14.500a1.900 1.900 0 0 0 1.900 1.900h6.600a1.900 1.900 0 0 0 1.900-1.900V14.300" fill="none" stroke="#6b7280" stroke-width="1.500" stroke-linecap="round"/></svg>
<div style="position:absolute;box-sizing:border-box;left:666px;top:676px;width:205px;height:39.5px;background:#fff;border:1px solid #e5e7eb;border-radius:0 20px 20px 0;border-left:none;box-shadow:0 1px 3px rgba(0,0,0,.10)"></div>
<div style="position:absolute;box-sizing:border-box;left:646.3px;top:676.3px;width:39.5px;height:39.5px;background:#e5e7eb;border:1px solid #d1d5db;border-radius:50%;box-shadow:0 1px 3px rgba(0,0,0,.15)"></div>
<svg style="position:absolute;left:659.2px;top:688px" width="13.56" height="15.50" viewBox="0 0 448 512"><path fill="#4b5563" d="M224 256A128 128 0 1 0 224 0a128 128 0 1 0 0 256zm-45.700 48C79.800 304 0 383.800 0 482.300C0 498.700 13.300 512 29.700 512H418.300c16.400 0 29.700-13.300 29.700-29.700C448 383.800 368.200 304 269.700 304H178.300z"/></svg>
<span style="position:absolute;left:716.60px;top:687px;font-size:18px;line-height:18px;font-weight:400;color:#111827;letter-spacing:0.175px;white-space:pre">Assign user</span>
<svg style="position:absolute;left:844.4px;top:692.4px;" width="15.2" height="8.2" viewBox="0 0 15.2 8.2"><polyline points="1,1 7.6,7.199999999999999 14.2,1" fill="none" stroke="#6b7280" stroke-width="1.9" stroke-linecap="round" stroke-linejoin="round"/></svg>
<div style="position:absolute;box-sizing:border-box;left:914.0px;top:681px;width:39px;height:30px;background:#dcfce7;border-radius:7.5px"></div>
<span style="position:absolute;left:924.55px;top:688px;font-size:15.5px;line-height:15.5px;font-weight:400;color:#22c55e;letter-spacing:0.080px;white-space:pre;-webkit-text-stroke:0.3px #22c55e">20</span>
<div style="position:absolute;box-sizing:border-box;left:1004.0px;top:681px;width:39px;height:30px;background:#dcfce7;border-radius:7.5px"></div>
<span style="position:absolute;left:1014.55px;top:688px;font-size:15.5px;line-height:15.5px;font-weight:400;color:#22c55e;letter-spacing:0.080px;white-space:pre;-webkit-text-stroke:0.3px #22c55e">50</span>
<svg style="position:absolute;left:1090px;top:640px;" width="210" height="115" viewBox="1090 640 210 115"><path d="M1124 657.500H1133.500V734.500H1124M1124 695.500H1133.500" fill="none" stroke="#e0e0e0" stroke-width="1"/><path d="M1136.00 695.300V682.38q0-2.20 2.20-2.20h6.90q2.20 0 2.20 2.20V695.300z" fill="#00c886" fill-opacity="1"/><path d="M1151.71 695.300V678.60q0-2.20 2.20-2.20h6.90q2.20 0 2.20 2.20V695.300z" fill="#00c886" fill-opacity="1"/><path d="M1167.42 695.300V678.60q0-2.20 2.20-2.20h6.90q2.20 0 2.20 2.20V695.300z" fill="#00c886" fill-opacity="1"/><path d="M1183.13 695.300V679.17q0-2.20 2.20-2.20h6.90q2.20 0 2.20 2.20V695.300z" fill="#00c886" fill-opacity="1"/><path d="M1198.84 695.300V678.60q0-2.20 2.20-2.20h6.90q2.20 0 2.20 2.20V695.300z" fill="#00c886" fill-opacity="1"/><path d="M1214.55 695.300V695.30q0-1.32 1.32-1.32h8.65q1.32 0 1.32 1.32V695.300z" fill="#00c886" fill-opacity="0.45"/><path d="M1230.26 695.300V678.60q0-2.20 2.20-2.20h6.90q2.20 0 2.20 2.20V695.300z" fill="#00c886" fill-opacity="1"/><path d="M1245.97 695.300V678.98q0-2.20 2.20-2.20h6.90q2.20 0 2.20 2.20V695.300z" fill="#00c886" fill-opacity="1"/><path d="M1261.68 695.300V678.60q0-2.20 2.20-2.20h6.90q2.20 0 2.20 2.20V695.300z" fill="#00c886" fill-opacity="1"/><path d="M1277.39 695.300V678.60q0-2.20 2.20-2.20h6.90q2.20 0 2.20 2.20V695.300z" fill="#00c886" fill-opacity="1"/><text x="1119.300" y="660.6" text-anchor="end" font-size="12.500" letter-spacing="-0.25" fill="#666" font-family="Liberation Sans, Arial, sans-serif">100</text><text x="1119.300" y="698.6" text-anchor="end" font-size="12.500" letter-spacing="-0.25" fill="#666" font-family="Liberation Sans, Arial, sans-serif">0</text><text x="1119.300" y="737.6" text-anchor="end" font-size="12.500" letter-spacing="-0.25" fill="#666" font-family="Liberation Sans, Arial, sans-serif">-100</text></svg>
<div style="position:absolute;box-sizing:border-box;left:1379.4px;top:681px;width:47.2px;height:30px;background:#f9fafb;border:1px solid #e5e7eb;border-radius:7.5px"></div>
<svg style="position:absolute;left:1388.5px;top:688.6px;" width="15" height="14" viewBox="0 0 15 14"><path d="M1.800 7H13.300M8.300 2l5 5-5 5" fill="none" stroke="#5b6472" stroke-width="1.600" stroke-linecap="round" stroke-linejoin="round"/></svg>
<span style="position:absolute;left:1408.30px;top:689px;font-size:14.5px;line-height:14.5px;font-weight:400;color:#374151;letter-spacing:0.000px;white-space:pre">0</span>
<div style="position:absolute;box-sizing:border-box;left:1515px;top:673px;width:171px;height:44.6px;background:#ffb3b3;border-radius:7.5px"></div>
<span style="position:absolute;left:1639.00px;top:687px;font-size:18px;line-height:18px;font-weight:400;color:#6b7280;letter-spacing:-1.205px;white-space:pre">-101</span>
<div style="position:absolute;box-sizing:border-box;left:1725.6px;top:673px;width:64.3px;height:44.6px;background:#b3ffb3;border-radius:7.5px"></div>
<span style="position:absolute;left:1745.60px;top:687px;font-size:18px;line-height:18px;font-weight:400;color:#6b7280;letter-spacing:-0.411px;white-space:pre">185</span>
<div style="position:absolute;box-sizing:border-box;left:1830px;top:673px;width:14px;height:44.6px;background:#b3ffb3;border-radius:7.5px 0 0 7.5px"></div>
<div style="position:absolute;box-sizing:border-box;left:494px;top:756px;width:1350px;height:1px;background:#e5e7eb"></div>
<div style="position:absolute;box-sizing:border-box;left:155px;top:805px;width:22px;height:22px;background:#fff;border:1px solid #d1d5db;border-radius:5.5px"></div>
<div style="position:absolute;box-sizing:border-box;left:192px;top:799px;width:1px;height:34.5px;background:#f3f4f6"></div>
<span style="position:absolute;left:208.90px;top:808px;font-size:17px;line-height:17px;font-weight:400;color:#4f46e5;letter-spacing:0.167px;white-space:pre;-webkit-text-stroke:0.6px #4f46e5">Abshire and Sons</span>
<span style="position:absolute;left:514.60px;top:808px;font-size:18px;line-height:18px;font-weight:400;color:#6b7280;letter-spacing:-1.144px;white-space:pre">910115</span>
<svg style="position:absolute;left:578.1px;top:808.5px;" width="16" height="17.5" viewBox="0 0 16 17.500"><rect x="5.200" y="0.900" width="9.800" height="11.800" rx="2.200" fill="none" stroke="#6b7280" stroke-width="1.500"/><path d="M2.900 4.200H2.700A1.900 1.900 0 0 0 .8 6.100V14.500a1.900 1.900 0 0 0 1.900 1.900h6.600a1.900 1.900 0 0 0 1.900-1.900V14.300" fill="none" stroke="#6b7280" stroke-width="1.500" stroke-linecap="round"/></svg>
<div style="position:absolute;box-sizing:border-box;left:666px;top:797px;width:205px;height:39.5px;background:#fff;border:1px solid #e5e7eb;border-radius:0 20px 20px 0;border-left:none;box-shadow:0 1px 3px rgba(0,0,0,.10)"></div>
<div style="position:absolute;box-sizing:border-box;left:646.3px;top:797.3px;width:39.5px;height:39.5px;background:#e5e7eb;border:1px solid #d1d5db;border-radius:50%;box-shadow:0 1px 3px rgba(0,0,0,.15)"></div>
<svg style="position:absolute;left:659.2px;top:809px" width="13.56" height="15.50" viewBox="0 0 448 512"><path fill="#4b5563" d="M224 256A128 128 0 1 0 224 0a128 128 0 1 0 0 256zm-45.700 48C79.800 304 0 383.800 0 482.300C0 498.700 13.300 512 29.700 512H418.300c16.400 0 29.700-13.300 29.700-29.700C448 383.800 368.200 304 269.700 304H178.300z"/></svg>
<span style="position:absolute;left:716.60px;top:808px;font-size:18px;line-height:18px;font-weight:400;color:#111827;letter-spacing:0.175px;white-space:pre">Assign user</span>
<svg style="position:absolute;left:844.4px;top:813.4px;" width="15.2" height="8.2" viewBox="0 0 15.2 8.2"><polyline points="1,1 7.6,7.199999999999999 14.2,1" fill="none" stroke="#6b7280" stroke-width="1.9" stroke-linecap="round" stroke-linejoin="round"/></svg>
<div style="position:absolute;box-sizing:border-box;left:914.0px;top:802px;width:39px;height:30px;background:#dcfce7;border-radius:7.5px"></div>
<span style="position:absolute;left:924.69px;top:809px;font-size:15.5px;line-height:15.5px;font-weight:400;color:#22c55e;letter-spacing:0.800px;white-space:pre;-webkit-text-stroke:0.3px #22c55e">26</span>
<div style="position:absolute;box-sizing:border-box;left:1004.0px;top:802px;width:39px;height:30px;background:#dcfce7;border-radius:7.5px"></div>
<span style="position:absolute;left:1014.69px;top:809px;font-size:15.5px;line-height:15.5px;font-weight:400;color:#22c55e;letter-spacing:0.800px;white-space:pre;-webkit-text-stroke:0.3px #22c55e">43</span>
<svg style="position:absolute;left:1090px;top:761px;" width="210" height="115" viewBox="1090 640 210 115"><path d="M1124 657.500H1133.500V734.500H1124M1124 695.500H1133.500" fill="none" stroke="#e0e0e0" stroke-width="1"/><path d="M1136.00 695.300V678.60q0-2.20 2.20-2.20h6.90q2.20 0 2.20 2.20V695.300z" fill="#00c886" fill-opacity="1"/><path d="M1151.71 695.300V682.38q0-2.20 2.20-2.20h6.90q2.20 0 2.20 2.20V695.300z" fill="#00c886" fill-opacity="1"/><path d="M1167.42 695.300V683.89q0-2.20 2.20-2.20h6.90q2.20 0 2.20 2.20V695.300z" fill="#00c886" fill-opacity="1"/><path d="M1183.13 696.4V699.49q0 2.20 2.20 2.20h6.90q2.20 0 2.20-2.20V696.4z" fill="#ff8a00"/><path d="M1198.84 695.300V663.48q0-2.20 2.20-2.20h6.90q2.20 0 2.20 2.20V695.300z" fill="#00c886" fill-opacity="1"/><path d="M1214.55 695.300V678.60q0-2.20 2.20-2.20h6.90q2.20 0 2.20 2.20V695.300z" fill="#00c886" fill-opacity="1"/><path d="M1230.26 695.300V678.60q0-2.20 2.20-2.20h6.90q2.20 0 2.20 2.20V695.300z" fill="#00c886" fill-opacity="1"/><path d="M1245.97 696.4V697.22q0 2.20 2.20 2.20h6.90q2.20 0 2.20-2.20V696.4z" fill="#ff8a00"/><path d="M1261.68 695.300V678.60q0-2.20 2.20-2.20h6.90q2.20 0 2.20 2.20V695.300z" fill="#00c886" fill-opacity="1"/><path d="M1277.39 695.300V681.25q0-2.20 2.20-2.20h6.90q2.20 0 2.20 2.20V695.300z" fill="#00c886" fill-opacity="1"/><text x="1119.300" y="660.6" text-anchor="end" font-size="12.500" letter-spacing="-0.25" fill="#666" font-family="Liberation Sans, Arial, sans-serif">100</text><text x="1119.300" y="698.6" text-anchor="end" font-size="12.500" letter-spacing="-0.25" fill="#666" font-family="Liberation Sans, Arial, sans-serif">0</text><text x="1119.300" y="737.6" text-anchor="end" font-size="12.500" letter-spacing="-0.25" fill="#666" font-family="Liberation Sans, Arial, sans-serif">-100</text></svg>
<div style="position:absolute;box-sizing:border-box;left:1377px;top:802px;width:52px;height:30px;background:#fee2e2;border-radius:7.5px"></div>
<svg style="position:absolute;left:1386px;top:809px;" width="14" height="15" viewBox="0 0 14 15"><path d="M6.500 1.300V13M1.500 8.200l5 5 5-5" fill="none" stroke="#ef4444" stroke-width="1.700" stroke-linecap="round" stroke-linejoin="round"/></svg>
<span style="position:absolute;left:1404.40px;top:810px;font-size:14.5px;line-height:14.5px;font-weight:400;color:#ef4444;letter-spacing:0.771px;white-space:pre">-7</span>
<div style="position:absolute;box-sizing:border-box;left:1515px;top:794px;width:171px;height:44.6px;background:#ffb3b3;border-radius:7.5px"></div>
<span style="position:absolute;left:1635.40px;top:808px;font-size:18px;line-height:18px;font-weight:400;color:#6b7280;letter-spacing:-0.005px;white-space:pre">-149</span>
<div style="position:absolute;box-sizing:border-box;left:1725.6px;top:794px;width:64.3px;height:44.6px;background:#b3ffb3;border-radius:7.5px"></div>
<span style="position:absolute;left:1743.70px;top:808px;font-size:18px;line-height:18px;font-weight:400;color:#6b7280;letter-spacing:0.539px;white-space:pre">437</span>
<div style="position:absolute;box-sizing:border-box;left:1830px;top:794px;width:14px;height:44.6px;background:#d4ffb0;border-radius:7.5px 0 0 7.5px"></div>
<div style="position:absolute;box-sizing:border-box;left:494px;top:877px;width:1350px;height:1px;background:#e5e7eb"></div>
<div style="position:absolute;box-sizing:border-box;left:155px;top:926px;width:22px;height:22px;background:#fff;border:1px solid #d1d5db;border-radius:5.5px"></div>
<div style="position:absolute;box-sizing:border-box;left:192px;top:920px;width:1px;height:34.5px;background:#f3f4f6"></div>
<span style="position:absolute;left:208.90px;top:929px;font-size:17px;line-height:17px;font-weight:400;color:#4f46e5;letter-spacing:0.049px;white-space:pre;-webkit-text-stroke:0.6px #4f46e5">Adams and Sons</span>
<span style="position:absolute;left:514.60px;top:929px;font-size:18px;line-height:18px;font-weight:400;color:#6b7280;letter-spacing:0.789px;white-space:pre">539648</span>
<svg style="position:absolute;left:589.1px;top:929.5px;" width="16" height="17.5" viewBox="0 0 16 17.500"><rect x="5.200" y="0.900" width="9.800" height="11.800" rx="2.200" fill="none" stroke="#6b7280" stroke-width="1.500"/><path d="M2.900 4.200H2.700A1.900 1.900 0 0 0 .8 6.100V14.500a1.900 1.900 0 0 0 1.900 1.900h6.600a1.900 1.900 0 0 0 1.900-1.900V14.300" fill="none" stroke="#6b7280" stroke-width="1.500" stroke-linecap="round"/></svg>
<div style="position:absolute;box-sizing:border-box;left:666px;top:918px;width:205px;height:39.5px;background:#fff;border:1px solid #e5e7eb;border-radius:0 20px 20px 0;border-left:none;box-shadow:0 1px 3px rgba(0,0,0,.10)"></div>
<div style="position:absolute;box-sizing:border-box;left:646.3px;top:918.3px;width:39.5px;height:39.5px;background:#e5e7eb;border:1px solid #d1d5db;border-radius:50%;box-shadow:0 1px 3px rgba(0,0,0,.15)"></div>
<svg style="position:absolute;left:659.2px;top:930px" width="13.56" height="15.50" viewBox="0 0 448 512"><path fill="#4b5563" d="M224 256A128 128 0 1 0 224 0a128 128 0 1 0 0 256zm-45.700 48C79.800 304 0 383.800 0 482.300C0 498.700 13.300 512 29.700 512H418.300c16.400 0 29.700-13.300 29.700-29.700C448 383.800 368.200 304 269.700 304H178.300z"/></svg>
<span style="position:absolute;left:716.60px;top:929px;font-size:18px;line-height:18px;font-weight:400;color:#111827;letter-spacing:0.175px;white-space:pre">Assign user</span>
<svg style="position:absolute;left:844.4px;top:934.4px;" width="15.2" height="8.2" viewBox="0 0 15.2 8.2"><polyline points="1,1 7.6,7.199999999999999 14.2,1" fill="none" stroke="#6b7280" stroke-width="1.9" stroke-linecap="round" stroke-linejoin="round"/></svg>
<div style="position:absolute;box-sizing:border-box;left:911.5px;top:923px;width:44px;height:30px;background:#dcfce7;border-radius:7.5px"></div>
<span style="position:absolute;left:919.55px;top:930px;font-size:15.5px;line-height:15.5px;font-weight:400;color:#22c55e;letter-spacing:0.230px;white-space:pre;-webkit-text-stroke:0.3px #22c55e">100</span>
<div style="position:absolute;box-sizing:border-box;left:1009.25px;top:923px;width:28.5px;height:30px;background:#dcfce7;border-radius:7.5px"></div>
<span style="position:absolute;left:1019.40px;top:930px;font-size:15.5px;line-height:15.5px;font-weight:400;color:#22c55e;letter-spacing:0.000px;white-space:pre;-webkit-text-stroke:0.3px #22c55e">8</span>
<svg style="position:absolute;left:1090px;top:882px;" width="210" height="115" viewBox="1090 640 210 115"><path d="M1124 657.500H1133.500V734.500H1124M1124 695.500H1133.500" fill="none" stroke="#e0e0e0" stroke-width="1"/><path d="M1136.00 695.300V678.60q0-2.20 2.20-2.20h6.90q2.20 0 2.20 2.20V695.300z" fill="#00c886" fill-opacity="1"/><path d="M1151.71 695.300V681.25q0-2.20 2.20-2.20h6.90q2.20 0 2.20 2.20V695.300z" fill="#00c886" fill-opacity="1"/><path d="M1167.42 695.300V690.32q0-2.20 2.20-2.20h6.90q2.20 0 2.20 2.20V695.300z" fill="#00c886" fill-opacity="0.6"/><path d="M1183.13 695.300V678.60q0-2.20 2.20-2.20h6.90q2.20 0 2.20 2.20V695.300z" fill="#00c886" fill-opacity="1"/><path d="M1198.84 695.300V682.76q0-2.20 2.20-2.20h6.90q2.20 0 2.20 2.20V695.300z" fill="#00c886" fill-opacity="1"/><path d="M1214.55 695.300V693.34q0-2.20 2.20-2.20h6.90q2.20 0 2.20 2.20V695.300z" fill="#00c886" fill-opacity="0.6"/><path d="M1230.26 695.300V685.78q0-2.20 2.20-2.20h6.90q2.20 0 2.20 2.20V695.300z" fill="#00c886" fill-opacity="1"/><path d="M1245.97 695.300V678.60q0-2.20 2.20-2.20h6.90q2.20 0 2.20 2.20V695.300z" fill="#00c886" fill-opacity="1"/><path d="M1261.68 696.4V717.26q0 2.20 2.20 2.20h6.90q2.20 0 2.20-2.20V696.4z" fill="#ff3366"/><path d="M1277.39 695.300V695.23q0-2.20 2.20-2.20h6.90q2.20 0 2.20 2.20V695.300z" fill="#00c886" fill-opacity="0.6"/><text x="1119.300" y="660.6" text-anchor="end" font-size="12.500" letter-spacing="-0.25" fill="#666" font-family="Liberation Sans, Arial, sans-serif">100</text><text x="1119.300" y="698.6" text-anchor="end" font-size="12.500" letter-spacing="-0.25" fill="#666" font-family="Liberation Sans, Arial, sans-serif">0</text><text x="1119.300" y="737.6" text-anchor="end" font-size="12.500" letter-spacing="-0.25" fill="#666" font-family="Liberation Sans, Arial, sans-serif">-100</text></svg>
<div style="position:absolute;box-sizing:border-box;left:1376.5px;top:923px;width:53px;height:30px;background:#dcfce7;border-radius:7.5px"></div>
<svg style="position:absolute;left:1385.5px;top:930px;" width="14" height="15" viewBox="0 0 14 15"><path d="M6.500 13.700V2M1.500 6.800l5-5 5 5" fill="none" stroke="#22c55e" stroke-width="1.700" stroke-linecap="round" stroke-linejoin="round"/></svg>
<span style="position:absolute;left:1403.50px;top:931px;font-size:14.5px;line-height:14.5px;font-weight:400;color:#22c55e;letter-spacing:0.436px;white-space:pre">65</span>
<div style="position:absolute;box-sizing:border-box;left:1515px;top:915px;width:171px;height:44.6px;background:#ffb3b3;border-radius:7.5px"></div>
<span style="position:absolute;left:1635.40px;top:929px;font-size:18px;line-height:18px;font-weight:400;color:#6b7280;letter-spacing:-0.005px;white-space:pre">-133</span>
<div style="position:absolute;box-sizing:border-box;left:1725.6px;top:915px;width:64.3px;height:44.6px;background:#b3ffb3;border-radius:7.5px"></div>
<span style="position:absolute;left:1742.80px;top:929px;font-size:18px;line-height:18px;font-weight:400;color:#6b7280;letter-spacing:0.989px;white-space:pre">404</span>
<div style="position:absolute;box-sizing:border-box;left:1830px;top:915px;width:14px;height:44.6px;background:#ffc78f;border-radius:7.5px 0 0 7.5px"></div>
</section></main>
<div style="position:absolute;box-sizing:border-box;left:1845px;top:470px;width:40px;height:513px;background:#f9fafb"></div>
<div style="position:absolute;box-sizing:border-box;left:1844px;top:488px;width:1px;height:495px;background:#e5e7eb"></div>
<div style="position:absolute;box-sizing:border-box;left:1800px;top:889px;width:70px;height:70px;border-radius:50%;background:linear-gradient(90deg,#2f55b5,#2d35ae);box-shadow:0 2px 14px rgba(0,0,0,.18)"></div>
<svg style="position:absolute;left:1815px;top:905px;" width="40" height="36" viewBox="1815 905 40 36"><path d="M1830.500 910.300h9c6.500 0 10.600 4.700 10.600 11.600 0 6.800-4.300 11.200-11.300 11.800-4 .3-7.300 .9-10.300 2.600-1.700 1-3.600 1.700-4.200 .9-.5-.7 .4-1.700 1-2.900 .4-.9 .2-1.600-.5-2.300-2.900-2.500-4.600-5.600-4.600-10.100 0-6.900 3.800-11.600 10.300-11.600z" fill="#fff"/></svg>
<div style="position:absolute;box-sizing:border-box;left:1800.4px;top:940px;width:18.5px;height:18.5px;border-radius:50%;background:#4ade80;border:2px solid #fff"></div>
</body></html>
